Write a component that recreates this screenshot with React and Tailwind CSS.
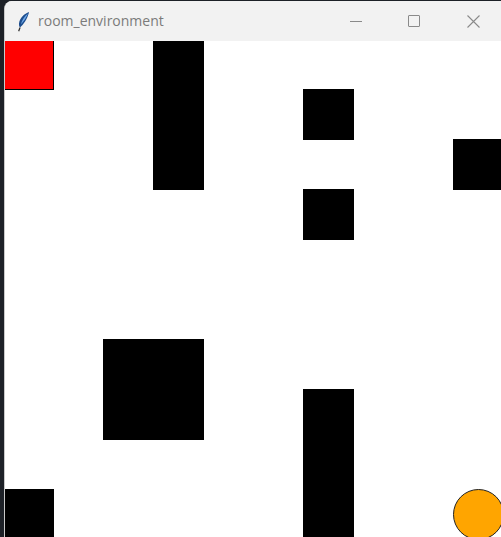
import React from "react";

const blocks = [
  [3, 0, 1, 3],
  [6, 1, 1, 1],
  [6, 3, 1, 1],
  [9, 2, 1, 1],
  [2, 6, 2, 2],
  [6, 7, 1, 3],
  [0, 9, 1, 1],
];

function Feather() {
  return (
    <svg width="13" height="21" viewBox="0 0 14 22">
      <path d="M13 0.8 C8 2.5 3 7 2.2 13 C1.9 15 2.4 16.6 3.3 17.4 C6.8 14.5 11 9 13 0.8 Z" fill="#1d4e8f" />
      <path d="M11.8 2.5 C8.6 5 5.5 9 4.1 14.2 C7.2 11 10 7 11.8 2.5 Z" fill="#6fa8e8" />
      <path d="M3.3 17.4 L1.8 21.5" stroke="#333" strokeWidth="1.3" />
    </svg>
  );
}

export default function App() {
  return (
    <div className="w-[501px] h-[537px] bg-[#1d2127] overflow-hidden flex flex-col pt-[1px] pl-[4px]">
      <div className="flex-1 flex flex-col bg-white rounded-tl-[8px] border-l border-[#c9c9c9] overflow-hidden">
        <div className="h-[40px] shrink-0 bg-[#f2f2f2] flex items-center" style={{ fontFamily: "'Open Sans', 'Noto Sans', sans-serif" }}>
          <div className="w-[33px] pl-[12px] flex pt-[1px]">
            <Feather />
          </div>
          <span className="text-[14px] text-[#7b7b7b] pb-[2px]">room_environment</span>
          <div className="flex-1" />
          <div className="w-[50px] h-[40px] flex items-center justify-center">
            <div className="w-[12px] h-px bg-[#8a8a8a]" />
          </div>
          <div className="w-[65px] h-[40px] flex items-center justify-center">
            <div className="w-[12px] h-[12px] border border-[#8a8a8a] rounded-[1px]" />
          </div>
          <div className="w-[55px] h-[40px] flex items-center justify-center">
            <svg width="13" height="13" viewBox="0 0 13 13">
              <path d="M0.5 0.5 L12.5 12.5 M12.5 0.5 L0.5 12.5" stroke="#8a8a8a" strokeWidth="1.1" />
            </svg>
          </div>
        </div>
        <div className="flex-1 overflow-hidden">
          <svg width="496" height="496" viewBox="0 0 496 496" className="block">
            <g transform="translate(-2,-2)">
              <rect x="0.5" y="0.5" width="50" height="50" fill="#ff0000" stroke="#000" strokeWidth="1" />
              {blocks.map(([c, r, w, h], i) => (
                <rect key={i} x={50 * c + 0.5} y={50 * r + 0.5} width={50 * w} height={50 * h} fill="#000" stroke="#000" strokeWidth="1" />
              ))}
              <circle cx={475.5} cy={475.5} r={25} fill="#ffa500" stroke="#222" strokeWidth="1" />
            </g>
          </svg>
        </div>
      </div>
    </div>
  );
}
